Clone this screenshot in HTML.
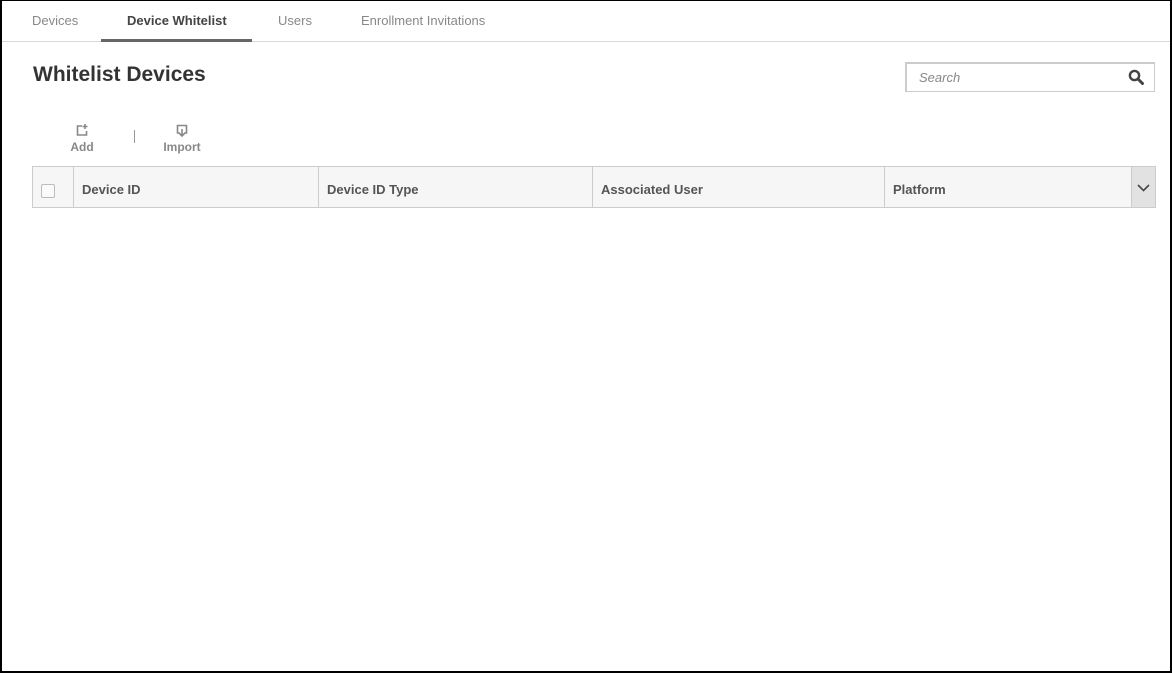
<!DOCTYPE html>
<html><head><style>
*{margin:0;padding:0;box-sizing:border-box}
body{width:1172px;height:673px;overflow:hidden;background:#fff;font-family:"Liberation Sans",sans-serif;}
.frame{position:absolute;left:0;top:0;width:1172px;height:673px;border:2px solid #000;border-top:1px solid #000;}
.tabs{position:absolute;left:0;top:0;width:1172px;height:42px;border-bottom:1px solid #d9d9d9;}
.tab{position:absolute;top:13px;font-size:13px;color:#888;}
.active{color:#444;font-weight:bold;}
.ul{position:absolute;left:101px;top:39px;width:151px;height:3px;background:#666;}
h1{position:absolute;left:33px;top:63px;font-size:21px;font-weight:bold;color:#333;}
.search{position:absolute;left:905px;top:62px;width:250px;height:30px;border:1px solid #ccc;border-left-width:2px;border-top-width:2px;}
.search span{position:absolute;left:12px;top:6px;font-size:13px;font-style:italic;color:#888;}
.tool{position:absolute;font-size:12px;font-weight:bold;color:#888;text-align:center;}
.table{position:absolute;left:32px;top:166px;width:1124px;height:42px;background:#f6f6f6;border:1px solid #ccc;}
.th{position:absolute;top:0;height:40px;line-height:45px;font-size:13px;font-weight:bold;color:#555;padding-left:8px;border-left:1px solid #ccc;}
</style></head><body>
<div class="tabs">
<div class="tab" style="left:32px">Devices</div>
<div class="tab active" style="left:127px">Device Whitelist</div>
<div class="tab" style="left:278px">Users</div>
<div class="tab" style="left:361px">Enrollment Invitations</div>
<div class="ul"></div>
</div>
<h1>Whitelist Devices</h1>
<div class="search"><span>Search</span>
<svg style="position:absolute;right:10px;top:5px" width="16" height="16" viewBox="0 0 16 16"><circle cx="6.5" cy="6.5" r="4.6" fill="none" stroke="#444" stroke-width="2.4"/><line x1="10" y1="10" x2="14.5" y2="14.5" stroke="#444" stroke-width="3" stroke-linecap="round"/></svg></div>
<div class="tool" style="left:66px;top:123px;width:32px">
<svg width="14" height="14" viewBox="0 0 14 14"><path d="M7 3H2.5v9h9V8" fill="none" stroke="#888" stroke-width="1.6"/><path d="M10 1v5M7.5 3.5h5" stroke="#888" stroke-width="1.6"/></svg><div style="margin-top:0px">Add</div></div>
<div style="position:absolute;left:134px;top:130px;width:1px;height:13px;background:#999"></div>
<div class="tool" style="left:160px;top:123px;width:44px">
<svg width="14" height="14" viewBox="0 0 14 14"><path d="M5 10H2.5V2.5h9V10H9" fill="none" stroke="#888" stroke-width="1.6"/><path d="M7 6v7M4.5 10.5L7 13l2.5-2.5" fill="none" stroke="#888" stroke-width="1.6"/></svg><div style="margin-top:0px">Import</div></div>
<div class="table">
<div style="position:absolute;left:8px;top:17px;width:14px;height:14px;border:1px solid #bbb;border-radius:2px;background:#fafafa"></div>
<div class="th" style="left:40px">Device ID</div>
<div class="th" style="left:285px">Device ID Type</div>
<div class="th" style="left:559px">Associated User</div>
<div class="th" style="left:851px">Platform</div>
<div style="position:absolute;left:1098px;top:0;width:24px;height:40px;background:#e2e2e2;border-left:1px solid #ccc">
<svg style="position:absolute;left:5px;top:17px" width="13" height="8" viewBox="0 0 13 8"><path d="M1 1l5.5 5.5L12 1" fill="none" stroke="#444" stroke-width="1.6"/></svg></div>
</div>
<div class="frame"></div>
</body></html>
